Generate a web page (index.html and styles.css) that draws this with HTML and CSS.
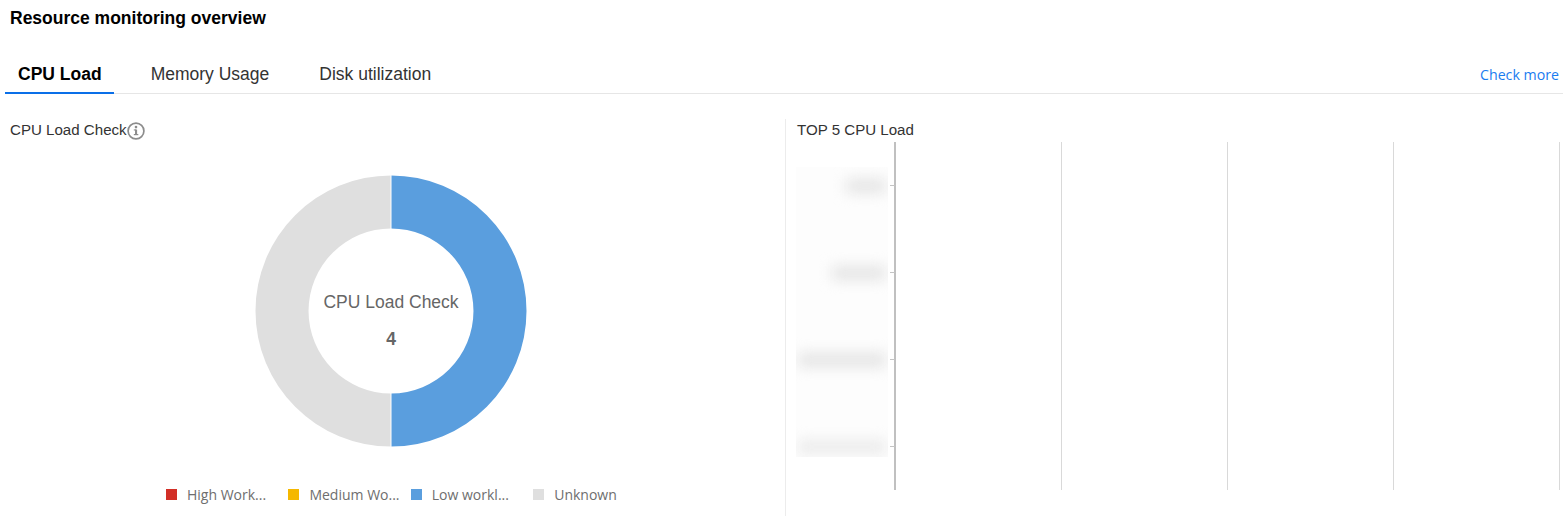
FILE: index.html
```html
<!DOCTYPE html>
<html lang="en">
<head>
  <meta charset="UTF-8">
  <meta name="viewport" content="width=device-width, initial-scale=1.0">
  <title>Resource monitoring overview</title>
  <link rel="stylesheet" href="styles.css">
</head>
<body>

  <h1 class="page-title">Resource monitoring overview</h1>

  <!-- Tabs -->
  <div class="tabs">
    <a class="tab active">CPU Load</a>
    <a class="tab">Memory Usage</a>
    <a class="tab">Disk utilization</a>
    <a class="check-more">Check more</a>
  </div>

  <div class="panels">
    <!-- Donut -->
    <div class="panel-left">
      <div class="panel-title">
        CPU Load Check
        <svg class="info-icon" width="18" height="18" viewBox="0 0 18 18">
          <circle cx="9" cy="9" r="7.9" fill="none" stroke="#8c8c8c" stroke-width="1.7"/>
          <rect x="8" y="7.6" width="2.1" height="5" fill="#8c8c8c"/>
          <rect x="6.8" y="7.4" width="2.4" height="1.1" fill="#8c8c8c"/>
          <rect x="6.8" y="12" width="4.5" height="1.2" fill="#8c8c8c"/>
          <circle cx="9" cy="5.1" r="1.3" fill="#8c8c8c"/>
        </svg>
      </div>
      <div class="donut-wrap">
        <svg width="272" height="272" viewBox="0 0 272 272">
          <path d="M136 0.5 A135.5 135.5 0 0 1 136 271.5 L136 218.5 A82.5 82.5 0 0 0 136 53.5 Z" fill="#5a9ede"/>
          <path d="M136 271.5 A135.5 135.5 0 0 1 136 0.5 L136 53.5 A82.5 82.5 0 0 0 136 218.5 Z" fill="#dfdfdf"/>
          <line x1="136" y1="0" x2="136" y2="54" stroke="#fff"/>
          <line x1="136" y1="218" x2="136" y2="272" stroke="#fff"/>
          <text class="donut-label" x="136" y="133" text-anchor="middle">CPU Load Check</text>
          <text class="donut-value" x="136" y="170" text-anchor="middle">4</text>
        </svg>
      </div>
      <div class="legend">
        <div class="legend-item"><span class="swatch red"></span><span>High Work...</span></div>
        <div class="legend-item"><span class="swatch yellow"></span><span>Medium Wo...</span></div>
        <div class="legend-item"><span class="swatch blue"></span><span>Low workl...</span></div>
        <div class="legend-item"><span class="swatch grey"></span><span>Unknown</span></div>
      </div>
    </div>

    <!-- Top 5 chart -->
    <div class="panel-right">
      <div class="panel-title">TOP 5 CPU Load</div>
      <div class="bar-chart">
        <div class="y-labels">
          <div class="y-row"><span class="smudge w40"></span></div>
          <div class="y-row"><span class="smudge w54"></span></div>
          <div class="y-row"><span class="smudge w88"></span></div>
          <div class="y-row"><span class="smudge w88 light"></span></div>
        </div>
        <div class="plot">
          <div class="grid-col first"></div>
          <div class="grid-col"></div>
          <div class="grid-col"></div>
          <div class="grid-col last"></div>
        </div>
      </div>
    </div>
  </div>

</body>
</html>
```

FILE: styles.css
```css
/* General Styling */
html, body {
  margin: 0;
  padding: 0;
  height: 526px;
  overflow: hidden;
  background-color: #fff;
}

body {
  font-family: "Liberation Sans", Arial, sans-serif;
  color: #222;
}

.page-title {
  margin: 0;
  padding: 9px 0 0 10px;
  height: 44px;
  font-size: 17.5px;
  line-height: 18px;
  font-weight: bold;
  color: #000;
}

/* Tabs */
.tabs {
  display: flex;
  align-items: flex-end;
  margin: 0 5px;
  height: 40px;
  border-bottom: 1px solid #e6e6e6;
}

.tab {
  padding: 0 13px;
  margin-right: 24px;
  height: 38px;
  line-height: 39px;
  font-size: 17.5px;
  color: #333;
}

.tab.active {
  height: 38px;
  padding-right: 12px;
  margin-bottom: -1px;
  line-height: 41px;
  font-weight: bold;
  color: #000;
  border-bottom: 2px solid #0a6fe8;
}

.check-more {
  margin-left: auto;
  margin-right: 4px;
  height: 38px;
  line-height: 40px;
  font-family: "Open Sans", sans-serif;
  font-size: 14.2px;
  color: #1a7cf0;
}

/* Panels */
.panels {
  display: flex;
  margin-top: 25px;
  height: 397px;
}

.panel-left {
  width: 785px;
  flex-shrink: 0;
  border-right: 1px solid #ececec;
}

.panel-right {
  flex: 1;
  padding-left: 10px;
}

.panel-title {
  display: flex;
  align-items: center;
  height: 20px;
  font-size: 15.1px;
  color: #333;
}

.panel-left .panel-title {
  padding-left: 10px;
}

.panel-right .panel-title {
  padding-left: 1px;
}

.info-icon {
  margin-top: 3px;
}

.donut-wrap {
  display: flex;
  justify-content: center;
  margin-top: 36px;
  padding-right: 3px;
}

.donut-wrap svg {
  display: block;
}

.donut-label {
  font-size: 17.5px;
  fill: #666;
}

.donut-value {
  font-size: 17.5px;
  font-weight: bold;
  fill: #666;
}

/* Legend */
.legend {
  display: flex;
  margin-top: 38px;
  padding-left: 166px;
}

.legend-item {
  display: flex;
  align-items: center;
  width: 122.4px;
  font-family: "Open Sans", sans-serif;
  font-size: 14px;
  white-space: nowrap;
  color: #6e6e6e;
}

.swatch {
  width: 11px;
  height: 11px;
  margin-right: 10px;
  flex-shrink: 0;
}

.swatch.red { background-color: #d22f27; }
.swatch.yellow { background-color: #f5b800; }
.swatch.blue { background-color: #5a9ede; }
.swatch.grey { background-color: #dfdfdf; }

/* Top 5 chart */
.bar-chart {
  display: flex;
  height: 348px;
  margin-top: 3px;
}

.y-labels {
  width: 92px;
  height: 290px;
  margin-top: 25px;
  overflow: hidden;
  background-color: #fdfdfd;
}

.y-row {
  display: flex;
  justify-content: flex-end;
  align-items: center;
  height: 87px;
  padding-right: 2px;
}

.y-row:first-child {
  margin-top: -25px;
}

.smudge {
  display: block;
  height: 14px;
  background-color: #e4e4e4;
  filter: blur(7px);
}

.smudge.light {
  background-color: #ebebeb;
}

.w40 { width: 40px; }
.w54 { width: 54px; }
.w88 { width: 88px; }

.plot {
  display: flex;
  margin-left: 6px;
}

.grid-col {
  width: 166px;
  position: relative;
  border-left: 1px solid #d9d9d9;
  box-sizing: border-box;
}

.grid-col:nth-child(2) {
  margin-left: 1px;
}

.grid-col.last {
  width: 167px;
  border-right: 1px solid #d9d9d9;
}

.grid-col.first {
  border-left: 2px solid #c0c0c0;
}

/* axis ticks */
.grid-col.first::before {
  content: "";
  position: absolute;
  left: -6px;
  top: 43px;
  width: 5px;
  height: 262px;
  background: repeating-linear-gradient(to bottom, #c4c4c4 0, #c4c4c4 1px, transparent 1px, transparent 87px);
}
```
